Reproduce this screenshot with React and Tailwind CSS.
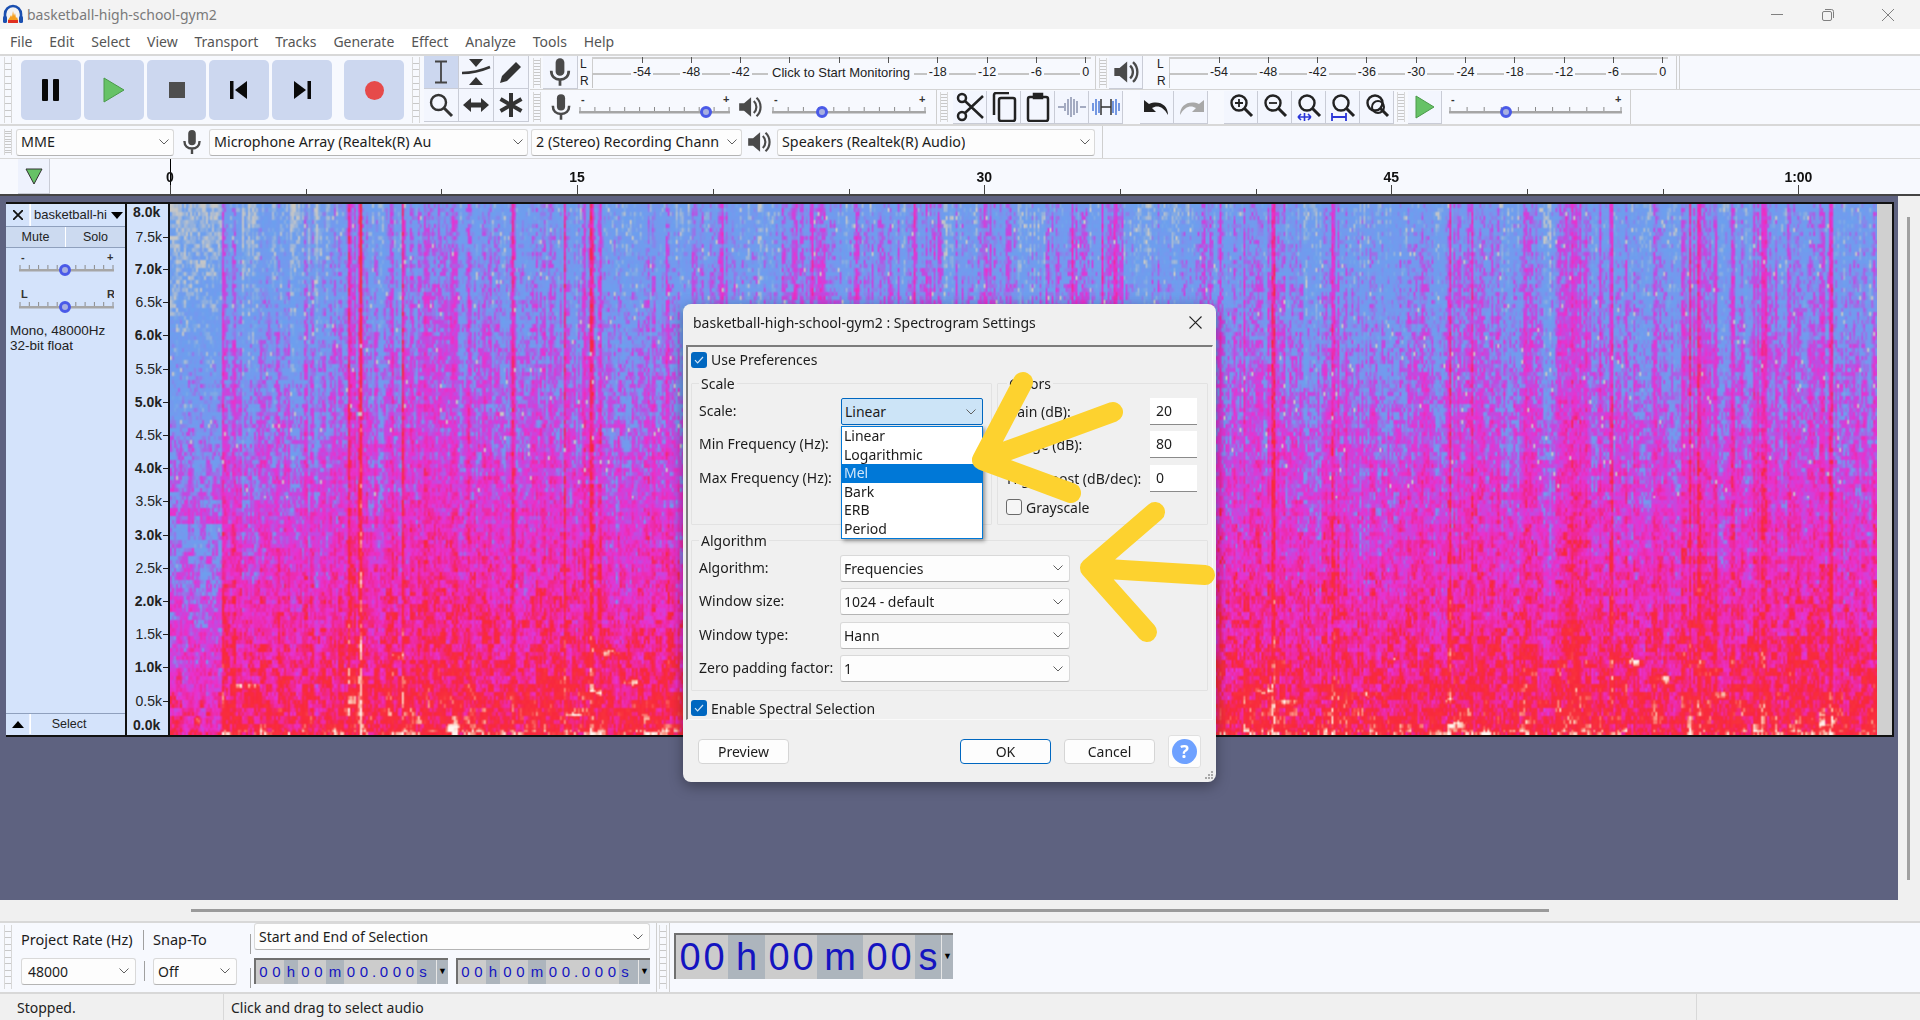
import { useEffect, useRef } from 'react';

const MENUS = ['File', 'Edit', 'Select', 'View', 'Transport', 'Tracks', 'Generate', 'Effect', 'Analyze', 'Tools', 'Help'];
const METER_LEFT = ['-54', '-48', '-42', null, null, null, '-18', '-12', '-6', '0'];
const METER_RIGHT = ['-54', '-48', '-42', '-36', '-30', '-24', '-18', '-12', '-6', '0'];
const FREQS = ['7.0k', '6.5k', '6.0k', '5.5k', '5.0k', '4.5k', '4.0k', '3.5k', '3.0k', '2.5k', '2.0k', '1.5k', '1.0k', '0.5k'];
const OPTIONS = ['Linear', 'Logarithmic', 'Mel', 'Bark', 'ERB', 'Period'];
const SMALL_TIME = [['00', 1, 28], ['h', 0, 14], ['00', 1, 28], ['m', 0, 18], ['00.000', 1, 73], ['s', 0, 12]];
const BIG_TIME = [['00', 1, 52], ['h', 0, 37], ['00', 1, 52], ['m', 0, 46], ['00', 1, 52], ['s', 0, 26]];

const Chevron = ({ className = '' }) => (
  <svg className={`w-[10px] h-[6px] shrink-0 ${className}`} viewBox="0 0 10 6" fill="none" stroke="#606060" strokeWidth="1">
    <path d="M0.5 0.5 5 5 9.5 0.5" />
  </svg>
);

const Grip = ({ className = '' }) => (
  <div className={`w-[8px] border-x border-[#d8d8d8] flex flex-col justify-evenly items-center shrink-0 ${className}`}>
    {[...Array(9)].map((_, i) => <span key={i} className="w-[6px] h-[1px] bg-[#c8c8c8]" />)}
  </div>
);

const Select = ({ label, className = '', tight }) => (
  <div className={`h-[27px] bg-[#fdfdfd] border border-[#d9d9d9] border-b-[#b4b4b4] rounded-[3px] flex items-center justify-between overflow-hidden ${tight ? 'pr-[4px]' : 'pr-[6px]'} ${className}`}>
    <span className="whitespace-nowrap overflow-hidden">{label}</span>
    <Chevron />
  </div>
);

const Mic = ({ size = 30 }) => (
  <svg width={size} height={size} viewBox="0 0 24 24" fill="none" stroke="#4a4a4a" strokeWidth="2.2">
    <rect x="8.5" y="1" width="7" height="14" rx="3.5" fill="#4a4a4a" stroke="none" />
    <path d="M5 11c0 4.5 3 7 7 7s7-2.5 7-7M12 18v5" />
  </svg>
);

const Speaker = ({ size = 30 }) => (
  <svg width={size} height={size} viewBox="0 0 24 24" fill="#4a4a4a" stroke="none">
    <path d="M2 8.5h4.5L13 3v18l-6.5-5.5H2z" />
    <path d="M15.5 6.5c3.2 3 3.2 8 0 11M18 3.5c5 4.5 5 12.500 0 17" fill="none" stroke="#4a4a4a" strokeWidth="2" />
  </svg>
);

const TransportBtn = ({ children, className = '' }) => (
  <div className={`w-[60px] h-[60px] rounded-[5px] bg-[#ccd7ef] flex items-center justify-center ${className}`}>{children}</div>
);

const ToolBtn = ({ children, active, className = '' }) => (
  <div className={`w-[34px] h-[33px] shrink-0 flex items-center justify-center border-r border-b border-[#c9ccd6] ${active ? 'bg-[#ccd7ef]' : 'bg-[#f3f6fe]'} ${className}`}>{children}</div>
);

const Magnifier = ({ inner, under }) => (
  <svg width="28" height="30" viewBox="0 0 28 30" fill="none" stroke="#222" strokeWidth="2.4">
    <circle cx="12" cy="11" r="7.5" />
    <path d="M17.500 16.500 25 24" strokeWidth="3" />
    {inner === 'plus' && <path d="M8 11h8M12 7v8" strokeWidth="1.800" />}
    {inner === 'minus' && <path d="M8 11h8" strokeWidth="1.800" />}
    {under === 'fit' && <path d="M3 25h13M3 25l3-3M3 25l3 3M16 25l-3-3M16 25l-3 3M9.500 21v8" stroke="#2a35d8" strokeWidth="1.600" />}
    {under === 'sel' && <path d="M3 25h14M3 21v8M17 21v8" stroke="#2a35d8" strokeWidth="1.800" />}
    {inner === 'toggle' && <circle cx="15" cy="15" r="6" strokeWidth="2" />}
  </svg>
);

const Slider = ({ width, pos, left = '-', right = '+' }) => (
  <svg width={width} height="26" viewBox={`0 0 ${width} 26`} className="shrink-0">
    <text x="2" y="9" fontSize="11" fontWeight="700" fontFamily="Liberation Sans" fill="#333">{left}</text>
    <text x={width - 7} y="9" fontSize="11" fontWeight="700" fontFamily="Liberation Sans" fill="#333">{right}</text>
    {[...Array(11)].map((_, i) => (
      <path key={i} d={`M${1 + ((width - 2) * i) / 10} 13v4`} stroke="#8a8a8a" />
    ))}
    <rect x="0" y="17" width={width} height="2.500" fill="#a6a6a6" />
    <circle cx={pos} cy="18" r="4.500" fill="#a8b0e0" stroke="#4a5ae8" strokeWidth="3" />
  </svg>
);

const Meter = ({ labels, hint }) => (
  <div className="relative w-[499px] h-[32px] shrink-0 font-['Liberation_Sans',sans-serif] text-[12.500px] text-[#222]">
    <div className="absolute left-0 right-0 top-0 h-[16px] border-t-2 border-l border-[#cfcfcf]" />
    <div className="absolute left-0 right-0 top-[16px] h-[15px] border-t-2 border-l border-[#c4c4c4]" />
    {labels.map((l, i) => (
      <div key={i} className="absolute top-0 h-[32px] w-[30px] flex flex-col items-center" style={{ left: 35 + i * 49.3 }}>
        <span className="w-[1px] h-[6px] bg-[#555] shrink-0" />
        {l && <span className="mt-[2px] bg-[#f7f9fe] px-[2px] leading-[14px]">{l}</span>}
      </div>
    ))}
    {hint && (
      <div className="absolute left-[176px] top-[6px] w-[146px] h-[20px] bg-[#f7f9fe] flex items-center justify-center whitespace-nowrap text-[13px]">{hint}</div>
    )}
  </div>
);

const LR = () => (
  <div className="w-[14px] h-[32px] flex flex-col justify-between font-['Liberation_Sans',sans-serif] text-[12px] leading-[15px] text-[#222] shrink-0 pl-[2px]">
    <span>L</span>
    <span>R</span>
  </div>
);

const Checkbox = ({ checked }) => (
  checked ? (
    <span className="w-[16px] h-[16px] rounded-[3px] bg-[#0067c0] flex items-center justify-center shrink-0">
      <svg width="10" height="8" viewBox="0 0 10 8" fill="none" stroke="#cfe4f7" strokeWidth="1.200"><path d="M1 4.200 3.600 6.800 9 1" /></svg>
    </span>
  ) : (
    <span className="w-[16px] h-[16px] rounded-[3px] border border-[#6a6a6a] bg-[#f6f6f6] shrink-0" />
  )
);

const Group = ({ title, className = '', children }) => (
  <div className={`border border-[#e2e2e2] rounded-[1px] ${className}`}>
    <div className="-mt-[10px] w-fit bg-[#f0f0f0] px-[2px] h-[20px] leading-[20px]">{title}</div>
    {children}
  </div>
);

const DialogBtn = ({ label, className = '' }) => (
  <div className={`w-[91px] h-[25px] rounded-[4px] bg-[#fdfdfd] border flex items-center justify-center ${className}`}>{label}</div>
);

const Time = ({ parts, big }) => (
  <div className={`flex items-stretch bg-[#adb5bd] font-['Liberation_Sans',sans-serif] text-[#1414c0] border-t-2 border-l-2 border-[#707070] ${big ? 'w-[279px] h-[46px] text-[38px]' : 'w-[194px] h-[26px] text-[15px]'}`}>
    {parts.map(([txt, isDigit, w], i) => (
      <div key={i} className={`flex items-center justify-center ${isDigit ? 'bg-[#cccccc]' : ''}`} style={{ width: w }}>
        {txt.split('').map((c, j) => {
          if (!isDigit) return <span key={j}>{c}</span>;
          return <span key={j} className={`text-center ${c === '.' ? 'w-[7px]' : big ? 'w-[24px]' : 'w-[13px]'}`}>{c}</span>;
        })}
      </div>
    ))}
    <div className="ml-auto w-[12px] flex items-center justify-center border-l border-[#e6e6e6] text-black text-[9px]">▼</div>
  </div>
);

// seeded noise so the picture comes out the same on each load
function makeRandom(seed) {
  let s = seed;
  return () => {
    s = (s * 1664525 + 1013904223) % 4294967296;
    return s / 4294967296;
  };
}

const PALETTE = [
  [0.0, [205, 200, 190]],
  [0.14, [196, 198, 200]],
  [0.27, [108, 160, 238]],
  [0.4, [118, 152, 238]],
  [0.5, [190, 76, 226]],
  [0.6, [232, 50, 208]],
  [0.72, [240, 40, 150]],
  [0.82, [248, 40, 60]],
  [0.95, [248, 50, 60]],
  [1.03, [250, 170, 150]],
  [1.14, [255, 245, 240]],
];

function colorAt(v) {
  if (v <= PALETTE[0][0]) return PALETTE[0][1];
  for (let i = 1; i < PALETTE.length; i++) {
    if (v <= PALETTE[i][0]) {
      const [a, ca] = PALETTE[i - 1];
      const [b, cb] = PALETTE[i];
      const k = (v - a) / (b - a);
      return [0, 1, 2].map((n) => ca[n] + (cb[n] - ca[n]) * k);
    }
  }
  return PALETTE[PALETTE.length - 1][1];
}

function drawSpectrogram(canvas) {
  const W = canvas.width;
  const H = canvas.height;
  const ctx = canvas.getContext('2d');
  const img = ctx.createImageData(W, H);
  const rnd = makeRandom(4711);

  // energy per column, fine and broad
  const cols = new Float32Array(W);
  let broad = 0;
  for (let x = 0; x < W; x++) {
    if (x % 9 === 0) broad = (rnd() - 0.4) * 0.16;
    cols[x] = broad + (rnd() - 0.5) * 0.16;
  }
  for (let x = 0; x < W; x++) {
    if (x < 26) cols[x] = -0.13 + (cols[x] * 0.3);
    if (x > 32 && x < 90 && (x % 30) < 14) cols[x] -= 0.08;
    if (x > 96 && x < 116) cols[x] -= 0.08;
  }
  const stripes = [26, 94, 116, 171, 197, 210, 466, 551, 640, 720, 760, 830];
  for (let i = 0; i < 60; i++) stripes.push(Math.floor(rnd() * W));
  stripes.forEach((sx, i) => {
    const w = i < 12 ? 1 + (i % 2) : 1 + Math.floor(rnd() * 2);
    const amp = i < 12 ? 0.2 + rnd() * 0.08 : 0.07 + rnd() * 0.08;
    for (let x = sx; x < Math.min(W, sx + w); x++) cols[x] += amp;
  });

  // blotches of loud noise close to the bottom
  const hot = [];
  for (let i = 0; i < 34; i++) {
    hot.push([rnd() * W, 0.84 + rnd() * 0.16, 2 + rnd() * 6, 0.005 + rnd() * 0.01]);
  }
  hot.push([W * 0.565, 0.75, 6, 0.02], [W * 0.57, 0.63, 3, 0.03]);

  const cell = new Float32Array(W * (Math.ceil(H / 2) + 1));
  for (let i = 0; i < cell.length; i++) cell[i] = rnd();

  for (let y = 0; y < H; y++) {
    const t = y / H;
    const base = 0.34 + 0.36 * t + 0.17 * t * t * t;
    for (let x = 0; x < W; x++) {
      const n = cell[Math.floor(y / 2) * W + x];
      const m = cell[(Math.floor(y / 4) * W + Math.floor(x / 3) * 3 + 7) % cell.length];
      let v = base + cols[x] * (1 - t * 0.6) + (n - 0.5) * 0.16 + (m - 0.5) * (0.08 + t * 0.16);
      if (n > 0.975) v -= 0.2;
      if (x < 26 && t > 0.6) v -= 0.1;
      if (t < 0.55 && n > 0.992) v = 0.12;
      for (const [hx, hy, hw, hh] of hot) {
        const dx = (x - hx) / hw;
        const dy = (t - hy) / hh;
        const d = dx * dx + dy * dy;
        if (d < 1) v += 0.2 * (1 - d) * (0.4 + m);
      }
      if (t > 0.985) v += 0.1 * n;
      const [r, g, b] = colorAt(v);
      const p = (y * W + x) * 4;
      img.data[p] = r;
      img.data[p + 1] = g;
      img.data[p + 2] = b;
      img.data[p + 3] = 255;
    }
  }
  ctx.putImageData(img, 0, 0);
}

const Spectrogram = () => {
  const ref = useRef(null);
  useEffect(() => {
    drawSpectrogram(ref.current);
  }, []);
  return <canvas ref={ref} width={854} height={266} className="w-[1707px] h-[532px] block shrink-0" />;
};

const Dialog = () => (
  <div className="absolute left-[683px] top-[304px] w-[533px] h-[478px] rounded-[8px] bg-[#f0f0f0] shadow-[0_4px_14px_rgba(0,0,0,0.35)] flex flex-col font-['Noto_Sans',sans-serif] text-[14px] text-[#1c1c1c] overflow-hidden">
    <div className="h-[37px] mb-[4px] shrink-0 flex items-center justify-between pl-[10px] pr-[14px]">
      <span>basketball-high-school-gym2 : Spectrogram Settings</span>
      <svg width="13" height="13" viewBox="0 0 13 13" stroke="#222" strokeWidth="1.100"><path d="M.5.5l12 12M12.500.5l-12 12" /></svg>
    </div>
    <div className="mx-[3px] h-[375px] shrink-0 border-t-2 border-l-2 border-[#7c7c7c] border-r border-b border-r-[#fafafa] border-b-[#fafafa] pl-[3px] pr-[3px] flex flex-col">
      <div className="h-[22px] mt-[2px] flex items-center gap-[4px]"><Checkbox checked />Use Preferences</div>
      <div className="flex gap-[5px] mt-[12px]">
        <Group title="Scale" className="w-[301px] h-[142px] pl-[7px]">
          <div className="flex flex-col gap-[6.500px] mt-[4px]">
            <div className="h-[27px] flex items-center pb-[2px]">Scale:</div>
            <div className="h-[27px] flex items-center pb-[2px]">Min Frequency (Hz):</div>
            <div className="h-[27px] flex items-center pb-[2px]">Max Frequency (Hz):</div>
          </div>
        </Group>
        <Group title="Colors" className="w-[211px] h-[142px] pl-[9px]">
          <div className="flex flex-col gap-[6.500px] mt-[4px]">
            <div className="h-[27px] flex items-center justify-between pr-[10px]">Gain (dB):<span className="w-[47px] h-[27px] bg-white border-b border-[#8a8a8a] pl-[6px] leading-[26px]">20</span></div>
            <div className="h-[27px] flex items-center justify-between pr-[10px]">Range (dB):<span className="w-[47px] h-[27px] bg-white border-b border-[#8a8a8a] pl-[6px] leading-[26px]">80</span></div>
            <div className="h-[27px] flex items-center justify-between pr-[10px]">High boost (dB/dec):<span className="w-[47px] h-[27px] bg-white border-b border-[#8a8a8a] pl-[6px] leading-[26px]">0</span></div>
            <div className="h-[18px] flex items-center gap-[4px] -ml-[1px]"><Checkbox />Grayscale</div>
          </div>
        </Group>
      </div>
      <Group title="Algorithm" className="w-[517px] h-[152px] mt-[15px] pl-[7px]">
        <div className="flex flex-col gap-[6.500px] mt-[4px]">
          {[['Algorithm:', 'Frequencies'], ['Window size:', '1024 - default'], ['Window type:', 'Hann'], ['Zero padding factor:', '1']].map(([k, v]) => (
            <div key={k} className="flex items-center h-[27px]">
              <span className="w-[141px] whitespace-nowrap pb-[2px]">{k}</span>
              <Select label={v} className="w-[230px] pl-[3px]" />
            </div>
          ))}
        </div>
      </Group>
      <div className="h-[22px] mt-[6px] flex items-center gap-[4px]"><Checkbox checked />Enable Spectral Selection</div>
    </div>
    <div className="flex items-center pl-[15px] mt-[15px]">
      <DialogBtn label="Preview" className="border-[#d5d5d5]" />
      <DialogBtn label="OK" className="ml-[171px] border-[#0067c0]" />
      <DialogBtn label="Cancel" className="ml-[13px] border-[#d5d5d5]" />
      <div className="ml-[13px] w-[33px] h-[33px] bg-[#fdfdfd] border border-[#e0e0e0] rounded-[3px] flex items-center justify-center">
        <span className="w-[25px] h-[25px] rounded-full bg-[#6ea1ff] text-white font-bold text-[18px] flex items-center justify-center">?</span>
      </div>
    </div>
    <svg className="absolute right-[2px] bottom-[2px]" width="10" height="10" viewBox="0 0 10 10" fill="#a8a8a8">
      <rect x="7" y="1" width="2" height="2" /><rect x="4" y="4" width="2" height="2" /><rect x="7" y="4" width="2" height="2" />
      <rect x="1" y="7" width="2" height="2" /><rect x="4" y="7" width="2" height="2" /><rect x="7" y="7" width="2" height="2" />
    </svg>

    {/* open dropdown */}
    <div className="absolute left-[158px] top-[94px] w-[142px] h-[27px] bg-[#cce4f7] border border-[#0067c0] rounded-[2px] flex items-center justify-between pl-[3px] pr-[6px]">
      Linear
      <Chevron />
    </div>
    <div className="absolute left-[158px] top-[122px] w-[142px] h-[113px] bg-white border border-[#0078d7] shadow-[2px_2px_4px_rgba(0,0,0,0.4)]">
      {OPTIONS.map((o) => (
        <div key={o} className={`h-[18.6px] leading-[18px] pl-[2px] ${o === 'Mel' ? 'bg-[#0078d7] text-[#cfe6fa]' : ''}`}>{o}</div>
      ))}
    </div>
  </div>
);

export default function App() {
  return (
    <div className="relative w-[1920px] h-[1020px] overflow-hidden flex flex-col bg-[#f0f0f0] font-['Noto_Sans',sans-serif] text-[14px] text-[#222]">
      {/* title bar */}
      <div className="h-[29px] shrink-0 bg-[#f3f3f3] flex items-center pl-[2px] text-[#7a7a7a]">
        <svg width="22" height="22" viewBox="0 0 22 22" fill="none">
          <path d="M3 15V10a8 8 0 0 1 16 0v5" stroke="#1a4fb0" strokeWidth="2.600" />
          <rect x="1" y="12" width="4" height="7" rx="1.500" fill="#1a4fb0" />
          <rect x="17" y="12" width="4" height="7" rx="1.500" fill="#1a4fb0" />
          <path d="M6 16h10l-1-3-1 1-1-5-1 3-1-5-1 6-1-2-1 2z" fill="#f5a020" />
          <rect x="6" y="16" width="10" height="3" fill="#e03020" />
        </svg>
        <span className="ml-[3px]">basketball-high-school-gym2</span>
        <div className="ml-auto flex items-center">
          <span className="w-[12px] h-[1px] bg-[#808080]" />
          <svg className="ml-[39px]" width="12" height="12" viewBox="0 0 12 12" fill="none" stroke="#808080"><rect x=".5" y="2.500" width="9" height="9" rx="1.500" /><path d="M3 .5h6.500a2 2 0 0 1 2 2V9" /></svg>
          <svg className="ml-[48px] mr-[26px]" width="12" height="12" viewBox="0 0 12 12" stroke="#808080"><path d="M0 0l12 12M12 0 0 12" /></svg>
        </div>
      </div>

      {/* menu bar */}
      <div className="h-[25px] shrink-0 bg-white flex items-center pl-[10px] gap-[16.900px] text-[#555]">
        {MENUS.map((m) => <span key={m}>{m}</span>)}
      </div>

      {/* tool rows */}
      <div className="h-[70px] shrink-0 bg-[#f7f9fe] border-t-2 border-[#d8d8d8] flex">
        <Grip className="ml-[4px] h-[66px] mt-[1px]" />
        <div className="flex items-center gap-[3px] ml-[9px] w-[383px]">
          <TransportBtn>
            <svg width="17" height="22" viewBox="0 0 17 22" fill="#0a0a0a"><rect width="6" height="22" rx="1" /><rect x="11" width="6" height="22" rx="1" /></svg>
          </TransportBtn>
          <TransportBtn>
            <svg width="22" height="26" viewBox="0 0 22 26" fill="#66c266" stroke="#4a9a4a"><path d="M1 1l20 12L1 25z" /></svg>
          </TransportBtn>
          <TransportBtn>
            <div className="w-[16px] h-[16px] bg-[#4e4e4e]" />
          </TransportBtn>
          <TransportBtn>
            <svg width="18" height="18" viewBox="0 0 18 18" fill="#0a0a0a"><rect width="3.500" height="18" /><path d="M17 0v18L5 9z" /></svg>
          </TransportBtn>
          <TransportBtn>
            <svg width="18" height="18" viewBox="0 0 18 18" fill="#0a0a0a"><rect x="14.500" width="3.500" height="18" /><path d="M1 0v18l12-9z" /></svg>
          </TransportBtn>
          <TransportBtn className="ml-[9px]">
            <div className="w-[19px] h-[19px] rounded-full bg-[#e64a4a]" />
          </TransportBtn>
        </div>
        <Grip className="ml-[8px] h-[66px] mt-[1px]" />
        <div className="w-[105px] ml-[4px] shrink-0 flex flex-wrap content-start">
          <ToolBtn active className="w-[35px]">
            <svg width="14" height="24" viewBox="0 0 14 24" fill="none" stroke="#444" strokeWidth="1.800"><path d="M1 1.500h12M7 1.500v21M1 22.500h12" /></svg>
          </ToolBtn>
          <ToolBtn className="w-[35px]">
            <svg width="30" height="26" viewBox="0 0 30 26" fill="#333"><path d="M8 0h14l-7 8zM8 26h14l-7-8z" /><path d="M1 14c8 0 16-1 28-6" stroke="#333" strokeWidth="2.500" fill="none" /></svg>
          </ToolBtn>
          <ToolBtn className="w-[35px]">
            <svg width="24" height="24" viewBox="0 0 24 24" fill="#333"><path d="M1 23l2-7L17 2l5 5L8 21z" /></svg>
          </ToolBtn>
          <ToolBtn className="w-[35px]">
            <svg width="26" height="26" viewBox="0 0 26 26" fill="none" stroke="#333" strokeWidth="2.400"><circle cx="10.500" cy="10.500" r="7.500" /><path d="M16 16l8 8" strokeWidth="3" /></svg>
          </ToolBtn>
          <ToolBtn className="w-[35px]">
            <svg width="26" height="16" viewBox="0 0 26 16" fill="#333"><path d="M0 8l8-7v4.500h10V1l8 7-8 7v-4.500H8V15z" /></svg>
          </ToolBtn>
          <ToolBtn className="w-[35px]">
            <svg width="26" height="26" viewBox="0 0 26 26" stroke="#333" strokeWidth="4"><path d="M13 1v24M2.500 7l21 12M23.500 7l-21 12" /></svg>
          </ToolBtn>
        </div>
        <div className="flex flex-col ml-[1px]">
          <div className="h-[34px] flex items-center border-b border-[#d4d4d4] w-[1390px]">
            <Grip className="ml-[3px] h-[30px]" />
            <ToolBtn className="ml-[2px] w-[35px]"><Mic /></ToolBtn>
            <LR />
            <Meter labels={METER_LEFT} hint="Click to Start Monitoring" />
            <span className="w-[1px] h-full bg-[#cfcfcf] ml-[4px]" />
            <Grip className="ml-[3px] h-[30px]" />
            <ToolBtn className="ml-[2px] w-[34px]"><Speaker size={28} /></ToolBtn>
            <span className="w-[12px]" />
            <LR />
            <Meter labels={METER_RIGHT} />
            <span className="w-[1px] h-full bg-[#cfcfcf] ml-[8px]" />
            <span className="w-[1px] h-full bg-[#cfcfcf] ml-[2px]" />
          </div>
          <div className="h-[34px] flex items-center w-[1390px]">
            <Grip className="ml-[3px] h-[30px]" />
            <span className="ml-[6px]"><Mic size={28} /></span>
            <span className="ml-[4px]"><Slider width={151} pos={127} /></span>
            <span className="ml-[7px]"><Speaker size={26} /></span>
            <span className="ml-[9px]"><Slider width={154} pos={50} /></span>
            <span className="w-[1px] h-full bg-[#cfcfcf] ml-[10px]" />
            <Grip className="ml-[3px] h-[30px]" />
            <ToolBtn className="ml-[5px]">
              <svg width="30" height="30" viewBox="0 0 30 30" fill="none" stroke="#222" strokeWidth="2.500"><circle cx="7" cy="6" r="4" /><circle cx="7" cy="24" r="4" /><path d="M10 9l18 17M10 21 28 4" /></svg>
            </ToolBtn>
            <ToolBtn>
              <svg width="26" height="30" viewBox="0 0 26 30" fill="none" stroke="#222" strokeWidth="2.500"><path d="M3 23V3a2 2 0 0 1 2-2h13" /><rect x="8" y="6" width="16" height="23" rx="2" /></svg>
            </ToolBtn>
            <ToolBtn>
              <svg width="24" height="30" viewBox="0 0 24 30" fill="none" stroke="#222" strokeWidth="2.500"><rect x="2" y="5" width="20" height="24" rx="2" /><path d="M8 6V2h8v4z" fill="#222" /></svg>
            </ToolBtn>
            <ToolBtn>
              <svg width="28" height="22" viewBox="0 0 28 22" fill="none" stroke="#8a93ad" strokeWidth="1.500"><path d="M0 11h6M22 11h6M7 7v8M10 3v16M13 1v20M16 3v16M19 5v12" /></svg>
            </ToolBtn>
            <ToolBtn>
              <svg width="28" height="22" viewBox="0 0 28 22" fill="none" stroke="#4a78d8" strokeWidth="1.500"><path d="M1 7v8M4 3v16M7 5v12" /><path d="M9 11h10M9 3v16M19 3v16" stroke="#333" /><path d="M21 5v12M24 3v16M27 7v8" /></svg>
            </ToolBtn>
            <ToolBtn className="ml-[17px] w-[34px]">
              <svg width="28" height="20" viewBox="0 0 28 20" fill="#222"><path d="M1 3v12h12l-4-4c5-3 11-2 16 7 0-10-9-15-19-11z" /></svg>
            </ToolBtn>
            <ToolBtn className="w-[33px]">
              <svg width="28" height="20" viewBox="0 0 28 20" fill="#a8a8a8"><path d="M27 3v12H15l4-4c-5-3-11-2-16 7C3 8 12 3 22 7z" /></svg>
            </ToolBtn>
            <span className="w-[16px]" />
            <ToolBtn><Magnifier inner="plus" /></ToolBtn>
            <ToolBtn><Magnifier inner="minus" /></ToolBtn>
            <ToolBtn><Magnifier under="fit" /></ToolBtn>
            <ToolBtn><Magnifier under="sel" /></ToolBtn>
            <ToolBtn><Magnifier inner="toggle" /></ToolBtn>
            <Grip className="ml-[3px] h-[30px]" />
            <ToolBtn className="ml-[3px]">
              <svg width="20" height="24" viewBox="0 0 20 24" fill="#66c266" stroke="#4a9a4a"><path d="M1 1l18 11L1 23z" /></svg>
            </ToolBtn>
            <span className="ml-[7px]"><Slider width={173} pos={57} /></span>
            <span className="w-[1px] h-full bg-[#cfcfcf] ml-[8px]" />
          </div>
        </div>
      </div>

      {/* device row */}
      <div className="h-[35px] shrink-0 bg-[#f7f9fe] border-t-2 border-b border-[#d8d8d8] flex items-center text-[14.300px] text-[#1c1c1c]">
        <Grip className="ml-[4px] h-[26px]" />
        <Select tight label="MME" className="w-[158px] ml-[4px] pl-[4px]" />
        <span className="ml-[5px] w-[26px] flex justify-center"><Mic size={28} /></span>
        <Select tight label="Microphone Array (Realtek(R) Au" className="w-[319px] ml-[4px] pl-[4px]" />
        <Select tight label="2 (Stereo) Recording Chann" className="w-[211px] ml-[3px] pl-[4px]" />
        <span className="ml-[3px] w-[27px] flex justify-center"><Speaker size={26} /></span>
        <Select tight label="Speakers (Realtek(R) Audio)" className="w-[318px] ml-[5px] pl-[4px]" />
        <span className="w-[1px] h-full bg-[#cfcfcf] ml-[7px]" />
      </div>

      {/* timeline ruler */}
      <div className="relative h-[37px] shrink-0 bg-[#f7f9fe] border-b-2 border-[#444] font-['Liberation_Sans',sans-serif] font-bold text-[14px] text-[#111]">
        <div className="absolute left-[18px] top-0 w-[32px] h-[35px] bg-[#eef2fd] border-r border-b border-[#c9ccd6] flex items-center justify-center">
          <svg width="18" height="17" viewBox="0 0 18 17" fill="#66c266" stroke="#333"><path d="M1 1h16L9 16z" /></svg>
        </div>
        <span className="absolute left-[170px] top-0 w-[1px] h-[35px] bg-black" />
        {[...Array(13)].map((_, i) => {
          const label = ['0', '15', '30', '45', '1:00'][i / 3];
          return (
            <div key={i} style={{ left: 170 + i * 135.7 }} className="absolute top-0 h-[35px]">
              <span className={`absolute bottom-0 left-0 w-[1px] ${label ? 'h-[9px]' : 'h-[5px]'} bg-[#444]`} />
              {label && <span className="absolute top-[10px] -translate-x-1/2 leading-[16px]">{label}</span>}
            </div>
          );
        })}
      </div>

      {/* track area */}
      <div className="h-[704px] shrink-0 flex">
        <div className="w-[1898px] shrink-0 bg-[#5e6280] pt-[6px] pl-[6px]">
          <div className="w-[1888px] h-[535px] border-y-2 border-r-2 border-[#111] flex font-['Liberation_Sans',sans-serif] text-[#222] overflow-hidden">
            <div className="w-[121px] shrink-0 bg-[#d4e3fb] border-r-2 border-[#111] flex flex-col text-[12.500px]">
              <div className="flex h-[23px] shrink-0 border-b border-[#8fa0bd]">
                <div className="w-[24px] flex items-center justify-center border-r border-[#f2f6ff]">
                  <svg width="10" height="10" viewBox="0 0 10 10" stroke="#111" strokeWidth="1.800"><path d="M0 0l10 10M10 0 0 10" /></svg>
                </div>
                <div className="flex-1 flex items-center justify-between pl-[3px] pr-[2px] border-l border-white">
                  <span className="text-[13px]">basketball-hi</span>
                  <span className="w-0 h-0 border-x-[6px] border-x-transparent border-t-[7px] border-t-black" />
                </div>
              </div>
              <div className="flex h-[21px] shrink-0 border-b border-[#8fa0bd] bg-[#ccdaf0]">
                <div className="w-[60px] flex items-center justify-center border-r border-white">Mute</div>
                <div className="flex-1 flex items-center justify-center">Solo</div>
              </div>
              <div className="mt-[4px] ml-[13px]"><Slider width={95} pos={46} /></div>
              <div className="mt-[11px] ml-[13px]"><Slider width={95} pos={46} left="L" right="R" /></div>
              <div className="mt-[8px] ml-[4px] leading-[15px] text-[13.500px] whitespace-nowrap">Mono, 48000Hz<br />32-bit float</div>
              <div className="mt-auto flex h-[21px] shrink-0 border-t border-[#8fa0bd] mb-[1px]">
                <div className="w-[24px] flex items-center justify-center border-r border-[#f2f6ff]">
                  <span className="w-0 h-0 border-x-[6px] border-x-transparent border-b-[7px] border-b-black" />
                </div>
                <div className="flex-1 flex items-center justify-center border-l border-white pr-[18px]">Select</div>
              </div>
            </div>
            <div className="w-[43px] shrink-0 bg-[#d4e3fb] border-r-2 border-[#111] flex flex-col text-[14px] text-[#222]">
              <div className="h-[17px] shrink-0 flex items-center pl-[6px] font-bold">8.0k</div>
              <div className="h-[32px] shrink-0 flex items-center justify-end gap-[1px]">7.5k<span className="w-[5px] h-[1px] bg-[#222]" /></div>
              {FREQS.map((f) => (
                <div key={f} className={`h-[33.2px] shrink-0 flex items-center justify-end gap-[1px] ${f.endsWith('.0k') ? 'font-bold' : ''}`}>
                  {f}<span className="w-[5px] h-[1px] bg-[#222]" />
                </div>
              ))}
              <div className="h-[16px] flex items-center pl-[6px] font-bold">0.0k</div>
            </div>
            <Spectrogram />
            <div className="flex-1 bg-[#d0d0d0]" />
          </div>
        </div>
        <div className="flex-1 flex justify-center pt-[21px] pb-[20px] -ml-[1px]">
          <span className="w-[3px] h-full bg-[#a0a0a0]" />
        </div>
      </div>

      {/* horizontal scrollbar */}
      <div className="h-[21px] shrink-0 flex items-center pl-[191px]">
        <span className="w-[1358px] h-[3px] bg-[#9a9a9a]" />
      </div>

      {/* selection toolbar */}
      <div className="h-[73px] shrink-0 bg-[#f7f9fe] border-y-2 border-[#d8d8d8] flex text-[14.500px] text-[#1c1c1c]">
        <Grip className="ml-[4px] h-[64px] mt-[2px]" />
        <div className="ml-[9px] flex flex-col w-[229px] shrink-0">
          <div className="h-[33px] flex items-center">
            <span className="w-[122px] whitespace-nowrap">Project Rate (Hz)</span>
            <span className="w-[1px] h-[20px] bg-[#a0a0a0]" />
            <span className="ml-[9px]">Snap-To</span>
          </div>
          <div className="h-[30px] flex items-center">
            <Select label="48000" className="w-[115px] pl-[6px] border-[#8a8a8a] text-[14px]" />
            <span className="w-[1px] h-[20px] bg-[#a0a0a0] ml-[8px]" />
            <Select label="Off" className="w-[84px] ml-[8px] pl-[4px] text-[14px]" />
          </div>
        </div>
        <span className="w-[1px] h-[20px] bg-[#a0a0a0] mt-[11px]" />
        <span className="w-[1px] h-[20px] bg-[#a0a0a0] mt-[45px] -ml-[1px]" />
        <div className="ml-[3px] flex flex-col w-[396px] shrink-0 text-[14px]">
          <Select label="Start and End of Selection" className="w-[396px] h-[27px] pl-[4px]" />
          <div className="flex justify-between mt-[8px]">
            <Time parts={SMALL_TIME} />
            <Time parts={SMALL_TIME} />
          </div>
        </div>
        <span className="w-[1px] h-full bg-[#cfcfcf] ml-[6px]" />
        <Grip className="ml-[2px] h-[64px] mt-[2px]" />
        <span className="w-[1px] h-full bg-[#cfcfcf] ml-[2px]" />
        <div className="ml-[4px] mt-[10px]">
          <Time big parts={BIG_TIME} />
        </div>
      </div>

      {/* status bar */}
      <div className="flex-1 bg-[#f0f0f0] flex items-center text-[14px] text-[#222]">
        <span className="w-[224px] pl-[17px] h-full flex items-center border-r border-[#d8d8d8]">Stopped.</span>
        <span className="pl-[7px] w-[1473px] h-full flex items-center border-r border-[#d8d8d8]">Click and drag to select audio</span>
      </div>

      <Dialog />

      {/* hand-drawn arrows laid over the dialog */}
      <svg className="absolute left-0 top-0 pointer-events-none" width="1920" height="1020" fill="none" stroke="#fdd22f" strokeWidth="20" strokeLinecap="round" strokeLinejoin="round">
        <path d="M1023 382 982 460 1113 412M982 460 1071 493" />
        <path d="M1155 512 1090 568 1205 575M1090 568 1147 632" />
      </svg>
    </div>
  );
}
